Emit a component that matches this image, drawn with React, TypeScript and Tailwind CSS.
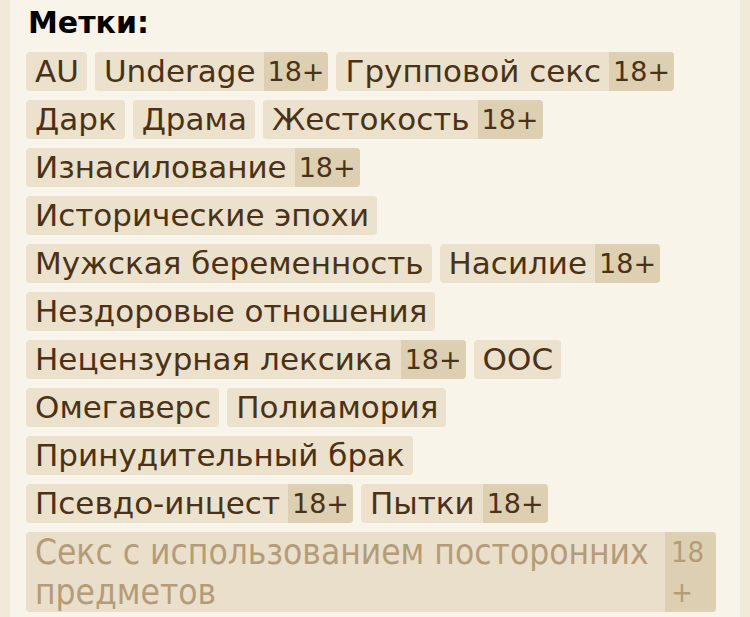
import React from "react"

type Tag = { name: string; adult?: boolean }

const tags: Tag[] = [
    { name: "AU" },
    { name: "Underage", adult: true },
    { name: "Групповой секс", adult: true },
    { name: "Дарк" },
    { name: "Драма" },
    { name: "Жестокость", adult: true },
    { name: "Изнасилование", adult: true },
    { name: "Исторические эпохи" },
    { name: "Мужская беременность" },
    { name: "Насилие", adult: true },
    { name: "Нездоровые отношения" },
    { name: "Нецензурная лексика", adult: true },
    { name: "OOC" },
    { name: "Омегаверс" },
    { name: "Полиамория" },
    { name: "Принудительный брак" },
    { name: "Псевдо-инцест", adult: true },
    { name: "Пытки", adult: true },
]

const TagChip = ({ tag }: { tag: Tag }) => (
    <span className="flex h-[39px] overflow-hidden rounded-[4px] bg-[#ebe1cd] leading-[39px] text-[#4a3216]">
        <span className="pl-[9px] pr-[8px]">{tag.name}</span>
        {tag.adult && (
            <span className="bg-[#ddcfb2] px-[4px] text-[27px]">18+</span>
        )}
    </span>
)

export default function App() {
    return (
        <div className="flex min-h-[617px] w-[750px] bg-[#f9f4e9] font-['DejaVu_Sans',Verdana,sans-serif]">
            <div className="w-[10px] shrink-0 bg-[#f1e9d9]" />
            <div className="flex-1 pl-[16px] pr-[24px]">
                <h3 className="pl-[2px] pt-[5px] text-[30px] font-bold leading-[36px] text-black">Метки:</h3>
                <div className="mt-[11px] flex flex-wrap gap-x-[8px] gap-y-[9px] text-[31px]">
                    {tags.map((t) => (
                        <TagChip key={t.name} tag={t} />
                    ))}
                    {/* long tag that wraps, still fading in */}
                    <span className="flex w-full overflow-hidden rounded-[4px] bg-[#eadfcb] text-[#b49c79]">
                        <span className="flex-1 pl-[9px] pr-[8px] font-['DejaVu_Sans_Condensed','Liberation_Sans_Narrow',sans-serif] text-[35px] leading-[40px] [font-stretch:condensed]">
                            Секс с использованием посторонних предметов
                        </span>
                        <span className="w-[51px] break-all bg-[#ddcfb2] px-[6px] font-['DejaVu_Sans_Condensed','Liberation_Sans_Narrow',sans-serif] text-[29px] leading-[40px] [font-stretch:condensed]">
                            18 +
                        </span>
                    </span>
                </div>
            </div>
            <div className="w-[10px] shrink-0 bg-[#f1e9d9]" />
        </div>
    )
}
